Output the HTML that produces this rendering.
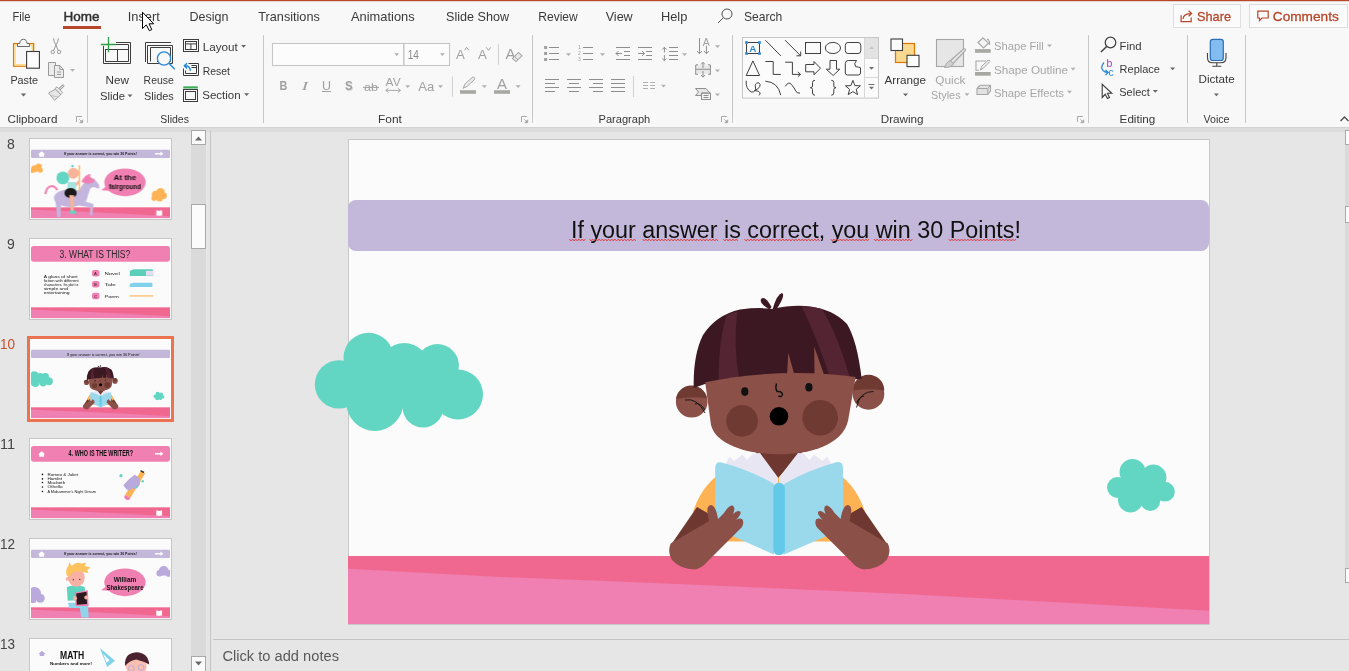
<!DOCTYPE html>
<html><head><meta charset="utf-8">
<style>
html,body{margin:0;padding:0;width:1349px;height:671px;overflow:hidden;background:#e6e6e6;}
svg{display:block;will-change:transform;font-family:"Liberation Sans",sans-serif;}
.t{fill:#383838;font-size:11.5px;}
.tab{fill:#3a3a3a;font-size:13px;}
.dis{fill:#a6a6a6;font-size:11.5px;}
.ic{fill:none;stroke:#505050;stroke-width:1;}
.icd{fill:none;stroke:#a8a8a8;stroke-width:1;}
.arr{fill:#666;}
.arrd{fill:#b0b0b0;}
.sep{stroke:#c8c8c8;stroke-width:1;}
</style></head>
<body>
<svg width="1349" height="671" viewBox="0 0 1349 671">
<!-- ===== chrome backgrounds ===== -->
<rect x="0" y="0" width="1349" height="127" fill="#f8f8f8"/>
<rect x="0" y="0" width="1349" height="1.2" fill="#b7472a"/>
<rect x="0" y="127" width="1349" height="1" fill="#d2d2d2"/>
<rect x="0" y="128" width="1349" height="4" fill="#dcdcdc"/>

<!-- ===== tabs ===== -->
<g id="tabs">
<text class="tab" x="12.5" y="21" textLength="18" lengthAdjust="spacingAndGlyphs">File</text>
<text class="tab" x="63.5" y="21" textLength="36" lengthAdjust="spacingAndGlyphs" style="fill:#303030;stroke:#303030;stroke-width:0.45">Home</text>
<rect x="63" y="26" width="38" height="3" fill="#b7472a"/>
<text class="tab" x="127.8" y="21" textLength="32" lengthAdjust="spacingAndGlyphs">Insert</text>
<text class="tab" x="189.5" y="21" textLength="39" lengthAdjust="spacingAndGlyphs">Design</text>
<text class="tab" x="258.3" y="21" textLength="61.5" lengthAdjust="spacingAndGlyphs">Transitions</text>
<text class="tab" x="351" y="21" textLength="63.7" lengthAdjust="spacingAndGlyphs">Animations</text>
<text class="tab" x="446" y="21" textLength="63" lengthAdjust="spacingAndGlyphs">Slide Show</text>
<text class="tab" x="538.3" y="21" textLength="39.4" lengthAdjust="spacingAndGlyphs">Review</text>
<text class="tab" x="605.7" y="21" textLength="27" lengthAdjust="spacingAndGlyphs">View</text>
<text class="tab" x="661" y="21" textLength="26.3" lengthAdjust="spacingAndGlyphs">Help</text>
<circle cx="727" cy="14" r="5" class="ic" stroke-width="1.2"/>
<line x1="723.3" y1="17.7" x2="718" y2="23" class="ic" stroke-width="1.3"/>
<text class="tab" x="744" y="21" textLength="38.3" lengthAdjust="spacingAndGlyphs">Search</text>
<!-- share / comments -->
<rect x="1173.5" y="4.5" width="67" height="23" fill="#fbfbfb" stroke="#dedede"/>
<path d="M1181.1 15.3 V21.6 H1191.2 V17.6" fill="none" stroke="#b7472a" stroke-width="1.2"/>
<path d="M1183 19 Q1183.5 13.6 1191 13.6 M1188.6 10.8 L1191.6 13.6 L1188.6 16.3" fill="none" stroke="#b7472a" stroke-width="1.2"/>
<text class="tab" x="1197" y="21" textLength="34" lengthAdjust="spacingAndGlyphs" style="fill:#b7472a;stroke:#b7472a;stroke-width:0.3">Share</text>
<rect x="1249.5" y="4.5" width="98" height="23" fill="#fbfbfb" stroke="#dedede"/>
<path d="M1257.8 11.2 H1268.2 V18 H1262 L1259.5 20.6 V18 H1257.8 Z" fill="none" stroke="#b7472a" stroke-width="1.2"/>
<text class="tab" x="1272.8" y="21" textLength="66" lengthAdjust="spacingAndGlyphs" style="fill:#b7472a;stroke:#b7472a;stroke-width:0.3">Comments</text>
</g>

<!-- ===== ribbon labels ===== -->
<g id="labels">
<text class="t" x="7.5" y="122.5" textLength="50" lengthAdjust="spacingAndGlyphs">Clipboard</text>
<text class="t" x="160.3" y="122.5" textLength="28.7" lengthAdjust="spacingAndGlyphs">Slides</text>
<text class="t" x="378" y="122.5" textLength="23.8" lengthAdjust="spacingAndGlyphs">Font</text>
<text class="t" x="598.5" y="122.5" textLength="51.8" lengthAdjust="spacingAndGlyphs">Paragraph</text>
<text class="t" x="880.7" y="122.5" textLength="42.9" lengthAdjust="spacingAndGlyphs">Drawing</text>
<text class="t" x="1119.6" y="122.5" textLength="35.7" lengthAdjust="spacingAndGlyphs">Editing</text>
<text class="t" x="1203.5" y="122.5" textLength="26" lengthAdjust="spacingAndGlyphs">Voice</text>
</g>
<g id="seps">
<line class="sep" x1="87.5" y1="35" x2="87.5" y2="123"/>
<line class="sep" x1="263.5" y1="35" x2="263.5" y2="123"/>
<line class="sep" x1="532.5" y1="35" x2="532.5" y2="123"/>
<line class="sep" x1="732.5" y1="35" x2="732.5" y2="123"/>
<line class="sep" x1="1088.5" y1="35" x2="1088.5" y2="123"/>
<line class="sep" x1="1187.5" y1="35" x2="1187.5" y2="123"/>
<line class="sep" x1="1245.5" y1="35" x2="1245.5" y2="123"/>
</g>

<!-- ===== Clipboard icons ===== -->
<g id="clip">
<rect x="13.6" y="43.6" width="20" height="22.6" fill="none" stroke="#e07800" stroke-width="1.3"/>
<rect x="15" y="45" width="17.2" height="19.8" fill="none" stroke="#fbd98a" stroke-width="1.6"/>
<path d="M17.5 46.5 V43.5 H19.8 Q20 39.3 23.4 39.3 Q26.8 39.3 27 43.5 H29.5 V46.5 Z" fill="#f8f8f8" stroke="#6b6b6b" stroke-width="1"/>
<rect x="26.6" y="51.5" width="12.8" height="16.7" fill="#fdfdfd" stroke="#3a3a3a" stroke-width="1.1"/>
<text class="t" x="10.4" y="83.6" textLength="27.6" lengthAdjust="spacingAndGlyphs">Paste</text>
<path d="M20.8 93.5 h5.4 l-2.7 3 z" class="arr"/>
<!-- cut -->
<g stroke="#9a9a9a" stroke-width="1" fill="none">
<circle cx="52.8" cy="52" r="1.7"/><circle cx="59.1" cy="52" r="1.7"/>
<path d="M53.6 38.3 Q53.8 42 55.9 45 L58.3 50.5 M58.4 38.3 Q58.2 42 56 45 L53.6 50.5"/>
</g>
<!-- copy -->
<g stroke="#9a9a9a" stroke-width="1" fill="#ececec">
<path d="M48.5 62.5 H55.5 V65.5 H54.5 V75.5 H48.5 Z"/>
<path d="M54.5 65.5 H59.8 L63.5 69.5 V77.5 H54.5 Z"/>
<path d="M59.8 65.5 V69.5 H63.5 M57 72 H61 M57 74.5 H61" fill="none"/>
</g>
<path d="M70 69 h5 l-2.5 2.8 z" class="arrd"/>
<!-- format painter -->
<path d="M58.8 90 L63 85.8" stroke="#a3a3a3" stroke-width="2.8" stroke-linecap="round"/>
<path d="M58.8 90 L63 85.8" stroke="#ececec" stroke-width="1" stroke-linecap="round"/>
<path d="M55.3 89.3 L48.5 93 L54.5 100.3 L60.8 94.7 Z" fill="#e6e6e6" stroke="#a3a3a3" stroke-width="1"/>
<path d="M51 95.5 L58 97" stroke="#b8b8b8" stroke-width="0.8"/>
<path d="M55 88.6 L57 86.8 L62.7 92.6 L60.9 94.6 Z" fill="#ececec" stroke="#a3a3a3" stroke-width="1"/>
<path d="M76.5 122 V116.5 H82.0" fill="none" stroke="#a8a8a8"/><path d="M79.2 119.2 L82.5 122.5 M82.7 119.8 V122.7 H79.8 Z" fill="#a8a8a8" stroke="#a8a8a8" stroke-width="0.9"/>
</g>

<!-- ===== Slides icons ===== -->
<g id="slides">
<g fill="none" stroke="#3d3d3d" stroke-width="1">
<path d="M116 42.5 H130.5 V63.5 H103.5 V46"/>
<path d="M116 44.5 H128.5 V61.5 H105.5 V49"/>
<path d="M105.5 49.5 H128.5 M117.5 49.5 V61.5"/>
</g>
<path d="M100.9 44.5 H115.9 M108.5 37.1 V52.3" stroke="#2e9e48" stroke-width="1.3" fill="none"/>
<text class="t" x="105.6" y="84" textLength="23.4" lengthAdjust="spacingAndGlyphs">New</text>
<text class="t" x="100" y="99.7" textLength="25" lengthAdjust="spacingAndGlyphs">Slide</text>
<path d="M127.5 94.5 h5 l-2.5 2.8 z" class="arr"/>
<g fill="none" stroke="#3d3d3d" stroke-width="1">
<path d="M145.5 62 V42.5 H171"/>
<path d="M147.5 63.5 V45.5 H172.5 V63.5 H147.5"/>
<path d="M150.5 61.5 V47.5 H170.5 V61.5 H157"/>
</g>
<circle cx="164" cy="58.5" r="6.6" fill="#f8f8f8" stroke="#2b88d8" stroke-width="1.3"/>
<path d="M168.8 63.3 L174.8 69.2" stroke="#2b88d8" stroke-width="1.4"/>
<text class="t" x="143.6" y="84" textLength="30.2" lengthAdjust="spacingAndGlyphs">Reuse</text>
<text class="t" x="144" y="99.7" textLength="29.8" lengthAdjust="spacingAndGlyphs">Slides</text>
<!-- layout -->
<g fill="none" stroke="#3d3d3d" stroke-width="1">
<rect x="183.5" y="39.5" width="15" height="12"/>
<rect x="185.5" y="41.5" width="11" height="8"/>
<path d="M185.5 43.9 H196.5 M190.9 43.9 V49.5"/>
<path d="M188.5 63.5 H198.5 V75.5 H183.5 V68.5"/>
<path d="M191.5 65.5 H196.5 V73.5 H185.5 V70.5 M191.5 67.5 H196.5"/>
<rect x="183.5" y="89.5" width="14" height="12"/>
<rect x="185.5" y="91.5" width="10" height="8"/>
</g>
<path d="M190.3 70.8 Q190.3 65.8 184.8 65.8 M187 63.2 L184.3 65.8 L187 68.4" fill="none" stroke="#1e88d8" stroke-width="1.4"/>
<rect x="183.3" y="86.3" width="14.5" height="2.2" fill="#3fae5a"/>
<text class="t" x="202.7" y="50.6" textLength="35" lengthAdjust="spacingAndGlyphs">Layout</text>
<path d="M241.1 45 h5 l-2.5 2.8 z" class="arr"/>
<text class="t" x="202.7" y="74.7" textLength="27.3" lengthAdjust="spacingAndGlyphs">Reset</text>
<text class="t" x="202.2" y="98.9" textLength="38.5" lengthAdjust="spacingAndGlyphs">Section</text>
<path d="M244.1 93.3 h5 l-2.5 2.8 z" class="arr"/>
</g>

<!-- ===== Font icons ===== -->
<g id="font">
<rect x="272.5" y="43.5" width="177" height="22" fill="#fcfcfc" stroke="#c6c6c6" stroke-width="1.1"/>
<line x1="403.8" y1="43.5" x2="403.8" y2="65.5" stroke="#c6c6c6" stroke-width="1.5"/>
<path d="M394.3 53.3 h4.8 l-2.4 2.8 z" class="arrd"/>
<path d="M440 53.3 h4.8 l-2.4 2.8 z" class="arrd"/>
<text x="407.7" y="59" font-size="12.3" fill="#8a8a8a" textLength="11.3" lengthAdjust="spacingAndGlyphs">14</text>
<text x="456" y="58.9" font-size="13" fill="#a0a0a0" textLength="8.8" lengthAdjust="spacingAndGlyphs">A</text>
<path d="M464.6 50.3 L466.7 47.3 L468.8 50.3" fill="none" stroke="#a0a0a0"/>
<text x="478" y="58.9" font-size="13" fill="#a0a0a0" textLength="8.8" lengthAdjust="spacingAndGlyphs">A</text>
<path d="M486.2 47.3 L488.5 50.3 L490.8 47.3" fill="none" stroke="#a0a0a0"/>
<line x1="498.5" y1="44.2" x2="498.5" y2="64.7" stroke="#d0d0d0"/>
<text x="505.5" y="59" font-size="14.5" fill="#a0a0a0" textLength="10" lengthAdjust="spacingAndGlyphs">A</text>
<path d="M512.5 58.4 L518.5 52.4 L522 55.8 L516 61.6 Z" fill="#e8e8e8" stroke="#a8a8a8" stroke-width="1.1"/>
<path d="M514.5 56.4 L518 59.8" stroke="#a8a8a8"/>
<text x="279.5" y="89.8" font-size="13.3" font-weight="bold" fill="#a0a0a0" textLength="7.8" lengthAdjust="spacingAndGlyphs">B</text>
<text x="301.5" y="89.8" font-size="13.3" font-style="italic" fill="#a0a0a0" font-family="Liberation Serif" textLength="6.8" lengthAdjust="spacingAndGlyphs">I</text>
<text x="322" y="89.5" font-size="13" fill="#a0a0a0" textLength="9" lengthAdjust="spacingAndGlyphs">U</text>
<line x1="322" y1="91.5" x2="331" y2="91.5" stroke="#a0a0a0" stroke-width="1"/>
<text x="345.8" y="90.7" font-size="13.5" font-weight="bold" fill="#d6d6d6" textLength="7.6" lengthAdjust="spacingAndGlyphs">S</text>
<text x="345" y="89.8" font-size="13.5" font-weight="bold" fill="#a0a0a0" textLength="7.6" lengthAdjust="spacingAndGlyphs">S</text>
<text x="364" y="91" font-size="11.5" fill="#a0a0a0" textLength="14" lengthAdjust="spacingAndGlyphs">ab</text>
<line x1="363" y1="87.4" x2="379" y2="87.4" stroke="#a0a0a0" stroke-width="1"/>
<text x="385.6" y="86.3" font-size="11" fill="#a0a0a0" textLength="15" lengthAdjust="spacingAndGlyphs">AV</text>
<path d="M385.8 90.4 H400.5 M388.5 88.3 L385.8 90.4 L388.5 92.5 M397.8 88.3 L400.5 90.4 L397.8 92.5" fill="none" stroke="#a0a0a0" stroke-width="0.9"/>
<path d="M405.3 85.3 h4.8 l-2.4 2.8 z" class="arrd"/>
<text x="418.3" y="90.9" font-size="13.4" fill="#a0a0a0" textLength="15.9" lengthAdjust="spacingAndGlyphs">Aa</text>
<path d="M438 85.3 h5 l-2.5 2.8 z" class="arrd"/>
<line x1="452.5" y1="76.3" x2="452.5" y2="96.7" stroke="#d0d0d0"/>
<path d="M463 88.3 L465 84 L472.3 77.3 Q474 76.6 475 78.3 L474.3 79.7 L467.3 86.3 Z" fill="#eaeaea" stroke="#a8a8a8" stroke-width="1"/>
<rect x="460" y="90.2" width="16" height="3.6" fill="#a8a8a2"/>
<path d="M481.9 85.3 h5 l-2.5 2.8 z" class="arrd"/>
<text x="497" y="88.8" font-size="14" fill="#a0a0a0" textLength="10" lengthAdjust="spacingAndGlyphs">A</text>
<rect x="494" y="90.2" width="16" height="3.6" fill="#a8a8a2"/>
<path d="M515.6 85.3 h5 l-2.5 2.8 z" class="arrd"/>
<path d="M521.5 122 V116.5 H527.0" fill="none" stroke="#a8a8a8"/><path d="M524.2 119.2 L527.5 122.5 M527.7 119.8 V122.7 H524.8 Z" fill="#a8a8a8" stroke="#a8a8a8" stroke-width="0.9"/>
</g>

<!-- ===== Paragraph icons ===== -->
<g id="para" fill="none" stroke="#8e8e8e" stroke-width="1">
<path d="M549 47.5 H559 M549 53.5 H559 M549 59.5 H559"/>
<path d="M583 47.5 H593 M583 53.5 H593 M583 59.5 H593"/>
<path d="M616 47.5 H630 M616 59.5 H630 M624 51.5 H630 M624 55.5 H630 M616 53.5 H622 M618.5 51 L616 53.5 L618.5 56"/>
<path d="M638 47.5 H652 M638 59.5 H652 M646 51.5 H652 M646 55.5 H652 M638 53.5 H644.5 M642 51 L644.5 53.5 L642 56"/>
<path d="M669 47.5 H678 M669 51.5 H678 M669 55.5 H678 M669 59.5 H678 M664.4 47.5 V52.5 M664.4 55 V60.5 M662.2 49.5 L664.4 47.3 L666.6 49.5 M662.2 58.5 L664.4 60.7 L666.6 58.5"/>
<path d="M545 79.5 H559 M545 83.5 H555 M545 87.5 H559 M545 91.5 H555"/>
<path d="M567 79.5 H581 M569 83.5 H579 M567 87.5 H581 M569 91.5 H579"/>
<path d="M589 79.5 H603 M593 83.5 H603 M589 87.5 H603 M593 91.5 H603"/>
<path d="M611 79.5 H625 M611 83.5 H625 M611 87.5 H625 M611 91.5 H625"/>
<path d="M643 82.5 H648 M650.2 82.5 H655 M643 85.5 H648 M650.2 85.5 H655 M643 88.5 H648 M650.2 88.5 H655" stroke="#b0b0b0"/>
<path d="M699.5 38 V53.5 M697 51 L699.5 53.7 L702 51 M706.4 45.6 V53.5 M704 51 L706.4 53.7 L708.8 51"/>
<path d="M695.8 64.9 H698 M695.8 64.9 V74.2 H698 M710.3 64.9 H708 M710.3 64.9 V74.2 H708" stroke-width="1.2"/>
<rect x="696.5" y="65.5" width="13" height="8.3" fill="#e8e8e8" stroke="none"/>
<path d="M696 69.3 H710 M703 62.5 V68 M703 71 V77 M701 64.5 L703 62.3 L705 64.5 M701 75 L703 77.2 L705 75"/>
<path d="M695.5 88.5 H706 L710 93 H701.5 V95.5 H695.5 L698.5 92 Z" fill="#e6e6e6"/>
<rect x="701.5" y="93.3" width="9" height="6.2" fill="#f4f4f4"/>
<path d="M703.5 95.5 H708.5 M703.5 97.5 H708.5"/>
</g>
<text x="702.8" y="45.6" font-size="10" fill="#a0a0a0" textLength="7" lengthAdjust="spacingAndGlyphs">A</text>
<g fill="#a0a0a0">
<rect x="544.1" y="46" width="3" height="3"/><rect x="544.1" y="52" width="3" height="3"/><rect x="544.1" y="58" width="3" height="3"/>
</g>
<g font-size="5" fill="#a0a0a0">
<text x="578.3" y="49.3">1</text><text x="578" y="55.3">2</text><text x="578" y="61.3">3</text>
</g>
<g class="arrd">
<path d="M566 53.3 h5 l-2.5 2.8 z"/><path d="M600 53.3 h5 l-2.5 2.8 z"/><path d="M682 53.3 h5 l-2.5 2.8 z"/>
<path d="M715 45.3 h5 l-2.5 2.8 z"/><path d="M715 69.5 h5 l-2.5 2.8 z"/><path d="M715 93.5 h5 l-2.5 2.8 z"/>
<path d="M661 84.8 h5 l-2.5 2.8 z"/>
</g>
<line x1="633.5" y1="76" x2="633.5" y2="97" stroke="#d0d0d0"/>
<path d="M721.5 122 V116.5 H727.0" fill="none" stroke="#a8a8a8"/><path d="M724.2 119.2 L727.5 122.5 M727.7 119.8 V122.7 H724.8 Z" fill="#a8a8a8" stroke="#a8a8a8" stroke-width="0.9"/>

<!-- ===== Drawing gallery ===== -->
<g id="draw">
<rect x="742.5" y="37.5" width="136" height="60.6" fill="#fbfbfb" stroke="#c6c6c6"/>
<rect x="865" y="38" width="13" height="20.3" fill="#e3e3e3"/>
<path d="M864.5 38 V98 M865 58.3 H878 M865 77.5 H878" stroke="#d8d8d8" fill="none"/>
<path d="M869 49 h5 l-2.5 -2.8 z" fill="#c4c4c4"/>
<path d="M869 67 h5 l-2.5 2.8 z" fill="#707070"/>
<path d="M868.5 84.5 H874.5" stroke="#707070" fill="none"/><path d="M869 86.8 h5 l-2.5 2.8 z" fill="#707070"/>
<g fill="none" stroke="#404040" stroke-width="1">
<rect x="746.5" y="42.5" width="13" height="11"/>
<path d="M765.4 40.2 L780.8 55.8"/>
<path d="M785.1 40.2 L800.5 55.6 M800.7 51.5 V55.8 H796.4"/>
<rect x="805.5" y="42.5" width="15" height="11"/>
<ellipse cx="832.9" cy="48" rx="7.6" ry="5.6"/>
<rect x="845.3" y="42.5" width="15.5" height="11" rx="2.8"/>
<path d="M752.9 60.9 L759.6 75.5 H746.2 Z"/>
<path d="M765.4 61.5 H773.2 V74.4 H780.8"/>
<path d="M785.1 62.2 H792.4 V74.4 H800.5 M797.8 71.9 L800.5 74.4 L797.8 76.9"/>
<path d="M805.7 64.5 H814 V61.5 L820.5 68.2 L814 74.8 V71.8 H805.7 Z"/>
<path d="M830 60.5 H836.5 V69.2 H839.8 L833.2 75.5 L826.3 69.2 H830 Z"/>
<path d="M845.3 63.5 Q845.3 60.5 848.3 60.5 H856.5 Q853.5 63.5 855.5 66.5 Q858.3 67 860.5 67.8 V73 Q860.5 75 858.3 75 H847.5 Q845.3 75 845.3 73 Z"/>
<path d="M746.2 80.7 Q745.5 89 751.4 92.1 Q756 92 755.6 88 Q754 83 758.7 82.7 Q761 84 759.7 86.9 Q757 90 754.5 90.5 Q760 91 760.2 93 Q760 95 758.7 95.2"/>
<path d="M765.4 81.2 Q778 82 780.8 95.2"/>
<path d="M785.3 86.4 Q788.5 81 791.5 84.5 Q794.5 88 796 91.5 Q797.5 93.5 800 93.1"/>
<path d="M815 80.3 Q812.5 80.3 812.5 82.5 V86 Q812.5 87.7 810.3 87.7 Q812.5 87.7 812.5 89.5 V93 Q812.5 95.2 815 95.2"/>
<path d="M831.3 80.3 Q833.8 80.3 833.8 82.5 V86 Q833.8 87.7 836 87.7 Q833.8 87.7 833.8 89.5 V93 Q833.8 95.2 831.3 95.2"/>
<path d="M852.9 80.4 L854.9 85.6 L860.4 85.8 L856.2 89.3 L857.6 94.6 L852.9 91.6 L848.2 94.6 L849.6 89.3 L845.4 85.8 L850.9 85.6 Z"/>
</g>
<g fill="#f8f8f8" stroke="#2b88d8" stroke-width="0.9">
<rect x="745.6" y="41.6" width="1.8" height="1.8"/><rect x="758.6" y="41.6" width="1.8" height="1.8"/>
<rect x="745.6" y="52.6" width="1.8" height="1.8"/><rect x="758.6" y="52.6" width="1.8" height="1.8"/>
</g>
<text x="749.3" y="51.8" font-size="9.5" font-weight="bold" fill="#2b88d8" textLength="7.2" lengthAdjust="spacingAndGlyphs">A</text>

<!-- arrange -->
<rect x="895.5" y="43.5" width="19" height="19" fill="#f9d88f" stroke="#e07800" stroke-width="1.2"/>
<rect x="891" y="39" width="11.5" height="11.5" fill="#fbfbfb" stroke="#3d3d3d" stroke-width="1.1"/>
<rect x="907" y="55.3" width="12" height="11.3" fill="#fbfbfb" stroke="#3d3d3d" stroke-width="1.1"/>
<text class="t" x="884.5" y="84.3" textLength="41.5" lengthAdjust="spacingAndGlyphs">Arrange</text>
<path d="M903 93.5 h5 l-2.5 2.8 z" class="arr"/>
<!-- quick styles -->
<rect x="936.5" y="39.5" width="27" height="27" fill="#e6e6e6" stroke="#a6a6a6" stroke-width="1.1"/>
<path d="M950 61 L963.5 49 Q966 48.2 965.3 50.7 L953 63.5 Z" fill="#e6e6e6" stroke="#a6a6a6" stroke-width="1.1"/>
<path d="M944.5 67.5 Q947 61 950.5 60.8 L953.5 63.8 Q952 67.5 944.5 67.5 Z" fill="#d0d0d0" stroke="#a6a6a6" stroke-width="1"/>
<text class="dis" x="935.3" y="83.6" textLength="30.2" lengthAdjust="spacingAndGlyphs">Quick</text>
<text class="dis" x="931" y="98.7" textLength="29.6" lengthAdjust="spacingAndGlyphs">Styles</text>
<path d="M964.5 93.3 h5 l-2.5 2.8 z" class="arrd"/>
<!-- shape fill/outline/effects -->
<path d="M978 42.5 L983 37.8 L988.5 43.2 L983.5 48 Z" fill="#f4f4f4" stroke="#a6a6a6" stroke-width="1.1"/>
<path d="M987 39 Q990 40 989.5 45" fill="none" stroke="#a6a6a6" stroke-width="1.1"/>
<rect x="975" y="49.1" width="15.7" height="3.7" fill="#a8a8a2"/>
<path d="M979 70.3 H976 V61 H986" fill="none" stroke="#a6a6a6" stroke-width="1.1"/>
<path d="M980.5 70 L981.5 66.5 L988 60.3 Q989.5 59.8 990 61.3 L983.8 67.8 Z" fill="#f0f0f0" stroke="#a6a6a6" stroke-width="1"/>
<rect x="975" y="72" width="15.7" height="3.7" fill="#a8a8a2"/>
<path d="M977 88.5 L980 85.3 H990.5 V91 L987.8 94.5 H977 Z" fill="#e2e2e2" stroke="#a6a6a6" stroke-width="1.1"/>
<path d="M977 88.5 H987.8 L990.5 85.3 M987.8 88.5 V94.5" fill="none" stroke="#a6a6a6" stroke-width="1"/>
<text class="dis" x="994" y="50" textLength="49.8" lengthAdjust="spacingAndGlyphs">Shape Fill</text>
<path d="M1047 44.5 h5 l-2.5 2.8 z" class="arrd"/>
<text class="dis" x="994" y="73.5" textLength="74" lengthAdjust="spacingAndGlyphs">Shape Outline</text>
<path d="M1070.6 67.8 h5 l-2.5 2.8 z" class="arrd"/>
<text class="dis" x="994" y="96.5" textLength="70" lengthAdjust="spacingAndGlyphs">Shape Effects</text>
<path d="M1067 90.8 h5 l-2.5 2.8 z" class="arrd"/>
<path d="M1077.5 122 V116.5 H1083.0" fill="none" stroke="#a8a8a8"/><path d="M1080.2 119.2 L1083.5 122.5 M1083.7 119.8 V122.7 H1080.8 Z" fill="#a8a8a8" stroke="#a8a8a8" stroke-width="0.9"/>
</g>

<!-- ===== Editing ===== -->
<g id="edit">
<circle cx="1110.5" cy="42.5" r="5.3" fill="none" stroke="#3d3d3d" stroke-width="1.2"/>
<path d="M1106.6 46.4 L1101 52" stroke="#3d3d3d" stroke-width="1.4"/>
<text class="t" x="1119.6" y="49.7" textLength="22" lengthAdjust="spacingAndGlyphs">Find</text>
<text x="1106.5" y="67" font-size="10.5" fill="#a23ab8">b</text>
<text x="1108.5" y="76" font-size="10.5" fill="#2b88d8">c</text>
<path d="M1104 62.5 Q1100 67 1103 70.5 Q1105 72.5 1108 72.5 M1105.5 70 L1108.3 72.5 L1105.5 75" fill="none" stroke="#2b88d8" stroke-width="1.2"/>
<text class="t" x="1119.6" y="73.2" textLength="40.4" lengthAdjust="spacingAndGlyphs">Replace</text>
<path d="M1170.1 67.5 h5 l-2.5 2.8 z" class="arr"/>
<path d="M1102.2 84.3 V97.5 L1105.2 94.3 L1107.5 98.5 L1109.5 97.5 L1107.4 93.3 L1111.8 93.3 Z" fill="#fbfbfb" stroke="#3d3d3d" stroke-width="1.1"/>
<text class="t" x="1119.3" y="95.6" textLength="30.5" lengthAdjust="spacingAndGlyphs">Select</text>
<path d="M1152.8 90 h5 l-2.5 2.8 z" class="arr"/>
</g>
<!-- ===== Voice ===== -->
<g id="voice">
<rect x="1210.3" y="39.3" width="13" height="21.2" rx="2.5" fill="#83bdf0" stroke="#2b6fb8" stroke-width="1.2"/>
<path d="M1207.5 53 V57.5 Q1207.5 62.8 1212.5 62.8 H1221 Q1226 62.8 1226 57.5 V53" fill="none" stroke="#404040" stroke-width="1.1"/>
<path d="M1216.8 62.8 V66 M1212.3 66.3 H1221.3" fill="none" stroke="#404040" stroke-width="1.1"/>
<text class="t" x="1198.5" y="83.3" textLength="36.3" lengthAdjust="spacingAndGlyphs">Dictate</text>
<path d="M1213.9 93.5 h5 l-2.5 2.8 z" class="arr"/>
<path d="M1340.5 121 L1344.5 117 L1348.5 121" fill="none" stroke="#505050" stroke-width="1.4"/>
</g>
<!-- cursor -->
<path d="M142.5 12.2 L142.5 28.6 L146.3 24.8 L149.3 30.7 L151.8 29.6 L149 23.8 L153.7 23.8 Z" fill="#fff" stroke="#000" stroke-width="1"/>

<!-- ===== left panel ===== -->
<rect x="191" y="131" width="15" height="540" fill="#dadada"/>
<rect x="191.5" y="130.5" width="14" height="14" fill="#fbfbfb" stroke="#a8a8a8"/>
<path d="M195 140.5 L198.5 136.5 L202 140.5 Z" fill="#6a6a6a"/>
<rect x="191.5" y="204.5" width="14" height="44" fill="#fbfbfb" stroke="#a8a8a8"/>
<rect x="191.5" y="656.5" width="14" height="15" fill="#fbfbfb" stroke="#a8a8a8"/>
<path d="M195 661.5 L198.5 665.5 L202 661.5 Z" fill="#6a6a6a"/>
<line x1="210.5" y1="131" x2="210.5" y2="671" stroke="#c4c4c4"/>

<!-- right scrollbar -->
<rect x="1345" y="131" width="4" height="437" fill="#dadada"/>
<rect x="1345.5" y="568.5" width="5" height="14" fill="#fbfbfb" stroke="#a8a8a8"/>
<rect x="1345.5" y="130.5" width="5" height="14" fill="#fbfbfb" stroke="#a8a8a8"/>
<rect x="1345.5" y="206.5" width="5" height="16" fill="#fbfbfb" stroke="#a8a8a8"/>

<!-- notes -->
<line x1="213" y1="639.5" x2="1349" y2="639.5" stroke="#c4c4c4"/>
<text x="222.4" y="660.7" font-size="15.4" fill="#595959" textLength="116.6" lengthAdjust="spacingAndGlyphs">Click to add notes</text>

<!-- ===== main slide ===== -->
<defs>
<g id="sbg"><rect x="348" y="139" width="861" height="485" fill="#fbfbfb"/></g>
<g id="pbar"><rect x="348" y="200" width="861" height="51" rx="8" fill="#c3b8da"/></g>
<g id="band"><rect x="348" y="556" width="861" height="68" fill="#f06890"/>
<path d="M348 568.8 L500 576.9 L600 580.8 L900 593.7 L1209 610.7 V624 H348 Z" fill="#f07fb2"/></g>
<g id="title10"><text x="571" y="237.6" font-size="23" fill="#111" textLength="450" lengthAdjust="spacingAndGlyphs">If your answer is correct, you win 30 Points!</text></g>
<g id="clouds10" fill="#63d6c3">
<circle cx="339" cy="384.4" r="24.2"/>
<circle cx="368.5" cy="357.8" r="25"/>
<circle cx="374.8" cy="402.3" r="28.6"/>
<circle cx="404.3" cy="368.3" r="25.3"/>
<circle cx="437.4" cy="365.6" r="21.5"/>
<circle cx="423" cy="407.2" r="20.4"/>
<circle cx="458" cy="394.5" r="25"/>
<rect x="352" y="372" width="96" height="34"/>
<circle cx="1117.4" cy="487.5" r="10.4"/>
<circle cx="1132.5" cy="471.9" r="13"/>
<circle cx="1153.4" cy="477.6" r="13"/>
<circle cx="1164.9" cy="491.7" r="9.9"/>
<circle cx="1130.5" cy="500" r="12.5"/>
<circle cx="1150.3" cy="501.1" r="9.9"/>
<rect x="1120" y="478" width="40" height="20"/>
</g>
<g id="boy">
<!-- shirt -->
<path d="M693 512 Q702 483 728 468 H830 Q856 483 865 512 L852 541.5 H706 Z" fill="#fdb354"/>
<!-- neck -->
<path d="M752 448 H806 L778 478 Z" fill="#6e3730"/>
<!-- collar -->
<path d="M729.5 456.5 L734 461 L742.5 454.5 L747 460 L753 453.5 L760 453 L778 477.5 L778 492 L720 475 Z" fill="#e9e6f3"/>
<path d="M827 456.5 L822.5 461 L814 454.5 L809.5 460 L803.5 453.5 L798 453 L779 477.5 L779 492 L838 475 Z" fill="#e9e6f3"/>
<!-- book -->
<path d="M715.2 468 Q715.2 461.5 721.5 462.5 Q750 470 774 484 V554.5 L735.8 537.4 L715.2 528 Z" fill="#99d9eb"/>
<path d="M843 468 Q843 461 837 462 Q808 470 784 484 V554.5 L823.3 537.4 L843 528 Z" fill="#99d9eb"/>
<rect x="773.3" y="482.8" width="11.6" height="72.2" rx="5.5" fill="#62c9e8"/>
<!-- ears -->
<circle cx="691.7" cy="401.8" r="15.8" fill="#8b5048"/>
<path d="M675.9 399 A15.8 15.8 0 0 1 707 398 Q690 396 675.9 399 Z" fill="#6e3a32"/>
<circle cx="868.5" cy="393.9" r="15.8" fill="#8b5048"/>
<path d="M852.7 390.5 A15.8 15.8 0 0 1 884.3 390.5 Q868 388 852.7 390.5 Z" fill="#6e3a32"/>
<path d="M685 400 Q697 397.5 705 413 M695 404 Q700 402 705 410" fill="none" stroke="#111" stroke-width="0.9"/>
<path d="M873.5 391.5 Q860 391 856.5 407.5 M864 396 Q858.5 397 856.8 403" fill="none" stroke="#111" stroke-width="0.9"/>
<!-- hair -->
<path d="M769.5 309.5 Q758 303 761.5 298.5 Q765.5 296 771.5 307 Z" fill="#3c1823"/>
<path d="M772.5 309.5 Q777 294 782 293 Q786 295 776 310 Z" fill="#3c1823"/>
<path d="M693.7 388 Q693 355 703 335 Q716 315 740 309.5 Q760 307 772.5 309 Q790 305 805 306 Q832 308 847 324 Q857 340 861.7 379 L705 384 Z" fill="#3c1823"/>
<path d="M726.3 315.5 Q732 312.5 737.4 311.5 Q733 345 739 378 L718.6 380 Q718 345 726.3 315.5 Z" fill="#552433"/>
<path d="M801.7 306.4 Q812 306 822.2 309 Q840 340 849.7 377.5 L829.1 375 Q818 340 801.7 306.4 Z" fill="#552433"/>
<!-- face -->
<path d="M705.2 382.3 Q780 367 855.6 376.9 L848.2 420 C843 445 810 454.3 779 454.3 C748 454.3 716 445 711 425 Z" fill="#8b5048"/>
<path d="M787.1 374 L788.3 352.7 L794 373.5 Z M814.5 374 L814.2 346.7 L824 374.5 Z" fill="#8b5048"/>
<circle cx="742.1" cy="420.9" r="15.8" fill="#6e3a32"/>
<circle cx="820.2" cy="417.7" r="17.8" fill="#6e3a32"/>
<ellipse cx="744.8" cy="391.6" rx="3.6" ry="4.3" fill="#111"/>
<ellipse cx="808.9" cy="387.3" rx="3.6" ry="4.3" fill="#111"/>
<circle cx="779" cy="416.3" r="9.3" fill="#000"/>
<path d="M776.5 383.5 Q775 388 777 391.5 Q782 391 782.5 394.5 Q782 397.5 778.5 396" fill="none" stroke="#111" stroke-width="1.4"/>
<!-- arms -->
<g id="armL">
<path d="M697 507 L670.5 545.5 L711.5 521.5 L707.5 513 Z" fill="#6e3730"/>
<path d="M670.7 543.5 Q667 552 672 560 Q680 569 695 569.5 Q702 568 707 562 L739 530 Q745 525 742.5 519.5 Q740 517.5 736 520 Q742 514 740.2 511.5 Q737.5 509.5 733 514 Q736 507 732.5 505.5 Q729 505 724 513 L718 519 Q716 506 711 505 Q706.5 505.5 707.5 513 L709 521 Z" fill="#8b5048"/>
</g>
<use href="#armL" transform="translate(1558.6,0) scale(-1,1)"/>
</g>
</defs>
<use href="#sbg"/><rect x="348.5" y="139.5" width="861" height="485" fill="none" stroke="#c8c8c8"/>
<use href="#pbar"/><use href="#title10"/><use href="#band"/>
<path d="M569.3 239.0 L570.9 241.0 L572.5 239.0 L574.1 241.0 L575.7 239.0 L577.3 241.0 L578.9 239.0 L580.5 241.0 L582.1 239.0 L583.7 241.0 L585.3 239.0 M589.4 239.0 L591.0 241.0 L592.6 239.0 L594.2 241.0 L595.8 239.0 L597.4 241.0 L599.0 239.0 L600.6 241.0 L602.2 239.0 L603.8 241.0 L605.4 239.0 L607.0 241.0 L608.6 239.0 L610.2 241.0 L611.8 239.0 L613.4 241.0 L615.0 239.0 L616.6 241.0 L618.2 239.0 L619.8 241.0 L621.4 239.0 L623.0 241.0 L624.6 239.0 L626.2 241.0 L627.8 239.0 L629.4 241.0 L631.0 239.0 L632.6 241.0 L634.2 239.0 L635.8 241.0 M642.7 239.0 L644.3 241.0 L645.9 239.0 L647.5 241.0 L649.1 239.0 L650.7 241.0 L652.3 239.0 L653.9 241.0 L655.5 239.0 L657.1 241.0 L658.7 239.0 L660.3 241.0 L661.9 239.0 L663.5 241.0 L665.1 239.0 L666.7 241.0 L668.3 239.0 L669.9 241.0 L671.5 239.0 L673.1 241.0 L674.7 239.0 L676.3 241.0 L677.9 239.0 L679.5 241.0 L681.1 239.0 L682.7 241.0 L684.3 239.0 L685.9 241.0 L687.5 239.0 L689.1 241.0 L690.7 239.0 L692.3 241.0 L693.9 239.0 L695.5 241.0 L697.1 239.0 L698.7 241.0 L700.3 239.0 L701.9 241.0 L703.5 239.0 L705.1 241.0 L706.7 239.0 L708.3 241.0 L709.9 239.0 L711.5 241.0 L713.1 239.0 L714.7 241.0 L716.3 239.0 L717.9 241.0 M723.3 239.0 L724.9 241.0 L726.5 239.0 L728.1 241.0 L729.7 239.0 L731.3 241.0 L732.9 239.0 L734.5 241.0 L736.1 239.0 L737.7 241.0 M744.5 239.0 L746.1 241.0 L747.7 239.0 L749.3 241.0 L750.9 239.0 L752.5 241.0 L754.1 239.0 L755.7 241.0 L757.3 239.0 L758.9 241.0 L760.5 239.0 L762.1 241.0 L763.7 239.0 L765.3 241.0 L766.9 239.0 L768.5 241.0 L770.1 239.0 L771.7 241.0 L773.3 239.0 L774.9 241.0 L776.5 239.0 L778.1 241.0 L779.7 239.0 L781.3 241.0 L782.9 239.0 L784.5 241.0 L786.1 239.0 L787.7 241.0 L789.3 239.0 L790.9 241.0 L792.5 239.0 L794.1 241.0 L795.7 239.0 L797.3 241.0 L798.9 239.0 L800.5 241.0 L802.1 239.0 L803.7 241.0 L805.3 239.0 L806.9 241.0 L808.5 239.0 L810.1 241.0 L811.7 239.0 L813.3 241.0 L814.9 239.0 L816.5 241.0 L818.1 239.0 L819.7 241.0 M830.6 239.0 L832.2 241.0 L833.8 239.0 L835.4 241.0 L837.0 239.0 L838.6 241.0 L840.2 239.0 L841.8 241.0 L843.4 239.0 L845.0 241.0 L846.6 239.0 L848.2 241.0 L849.8 239.0 L851.4 241.0 L853.0 239.0 L854.6 241.0 L856.2 239.0 L857.8 241.0 L859.4 239.0 L861.0 241.0 L862.6 239.0 L864.2 241.0 L865.8 239.0 L867.4 241.0 L869.0 239.0 M874.0 239.0 L875.6 241.0 L877.2 239.0 L878.8 241.0 L880.4 239.0 L882.0 241.0 L883.6 239.0 L885.2 241.0 L886.8 239.0 L888.4 241.0 L890.0 239.0 L891.6 241.0 L893.2 239.0 L894.8 241.0 L896.4 239.0 L898.0 241.0 L899.6 239.0 L901.2 241.0 L902.8 239.0 L904.4 241.0 L906.0 239.0 L907.6 241.0 L909.2 239.0 L910.8 241.0 L912.4 239.0 M948.7 239.0 L950.3 241.0 L951.9 239.0 L953.5 241.0 L955.1 239.0 L956.7 241.0 L958.3 239.0 L959.9 241.0 L961.5 239.0 L963.1 241.0 L964.7 239.0 L966.3 241.0 L967.9 239.0 L969.5 241.0 L971.1 239.0 L972.7 241.0 L974.3 239.0 L975.9 241.0 L977.5 239.0 L979.1 241.0 L980.7 239.0 L982.3 241.0 L983.9 239.0 L985.5 241.0 L987.1 239.0 L988.7 241.0 L990.3 239.0 L991.9 241.0 L993.5 239.0 L995.1 241.0 L996.7 239.0 L998.3 241.0 L999.9 239.0 L1001.5 241.0 L1003.1 239.0 L1004.7 241.0 L1006.3 239.0 L1007.9 241.0 L1009.5 239.0 L1011.1 241.0 L1012.7 239.0 L1014.3 241.0 L1015.9 239.0" fill="none" stroke="#e23b3b" stroke-width="0.9"/>
<use href="#clouds10"/><use href="#boy"/>
<!-- ===== thumbnails ===== -->
<defs>
<g id="homeic" fill="#ffffff"><path d="M-22 4 L0 -16 L22 4 H15 V18 H-15 V4 Z"/></g>
<g id="arric" fill="#ffffff"><path d="M-26 -5 H8 V-14 L26 0 L8 14 V5 H-26 Z"/></g>
<g id="bookic" fill="#ffffff"><path d="M-18 -16 Q-9 -19 0 -13 Q9 -19 18 -16 V16 Q9 12 0 17 Q-9 12 -18 16 Z"/></g>
<g id="ptitle"><rect x="348" y="176" width="861" height="97" rx="16" fill="#f07fb2"/></g>
<g id="tbubble">
<ellipse cx="930" cy="401" rx="128" ry="86" fill="#f07fb2"/>
<path d="M820 420 L783 451 L860 455 Z" fill="#f07fb2"/>
</g>
<g id="tsmalltitle"><text x="552" y="234" font-size="22" font-weight="bold" fill="#1a1a1a" textLength="452" lengthAdjust="spacingAndGlyphs">If your answer is correct, you win 30 Points!</text></g>
<g id="th8">
<use href="#sbg"/><use href="#band"/><use href="#pbar"/><use href="#tsmalltitle"/>
<use href="#homeic" transform="translate(414,224)"/><use href="#arric" transform="translate(1142,224)"/>
<g fill="#fdb354"><circle cx="370" cy="318" r="22"/><circle cx="395" cy="305" r="20"/><circle cx="405" cy="325" r="16"/><circle cx="355" cy="330" r="14"/></g>
<g fill="#fdb354"><circle cx="1120" cy="478" r="24"/><circle cx="1150" cy="462" r="26"/><circle cx="1170" cy="485" r="20"/><circle cx="1110" cy="500" r="16"/><circle cx="1145" cy="500" r="20"/></g>
<path d="M436 474 Q445 425 477 424 Q500 426 510 450" fill="none" stroke="#f07fb2" stroke-width="13"/>
<ellipse cx="590" cy="498" rx="100" ry="56" fill="#c3b5dd"/>
<path d="M640 470 Q660 400 710 385 Q750 375 770 420 Q775 440 760 440 Q735 420 715 440 Q700 480 690 520 Z" fill="#c3b5dd"/>
<path d="M650 510 L735 535 L728 607 L712 605 L715 555 L645 545 Z" fill="#c3b5dd"/>
<path d="M500 520 L535 530 L530 618 L510 618 Z" fill="#c3b5dd"/>
<path d="M660 400 Q680 350 720 350 Q700 370 740 380 Q760 395 700 410 Z" fill="#f07fb2"/>
<rect x="643" y="295" width="8" height="162" fill="#fdb354"/>
<circle cx="545" cy="374" r="40" fill="#63d6c3"/>
<circle cx="610" cy="345" r="34" fill="#f7b49a"/>
<circle cx="605" cy="300" r="8" fill="#63d6c3"/>
<path d="M575 400 H625 L630 455 H570 Z" fill="#a8e3e4"/>
<path d="M620 410 L645 385 L652 395 L630 425 Z" fill="#f7b49a"/>
<ellipse cx="593" cy="468" rx="38" ry="31" fill="#1a1a1a"/>
<path d="M585 480 L615 482 L612 580 L595 580 Z" fill="#f7b49a"/>
<path d="M590 575 L625 578 L630 595 L588 596 Z" fill="#63d6c3"/>
<use href="#tbubble"/>
<text x="930" y="388" text-anchor="middle" font-size="46" font-weight="bold" fill="#111" textLength="140" lengthAdjust="spacingAndGlyphs">At the</text>
<text x="930" y="440" text-anchor="middle" font-size="46" font-weight="bold" fill="#111" textLength="200" lengthAdjust="spacingAndGlyphs">fairground</text>
<use href="#bookic" transform="translate(1142,592)"/>
</g>
<g id="th9">
<use href="#sbg"/><use href="#ptitle"/>
<text x="525" y="249" font-size="66" fill="#2a2a2a" textLength="438" lengthAdjust="spacingAndGlyphs">3. WHAT IS THIS?</text>
<g font-size="20" fill="#111">
<text x="427" y="372" textLength="210" lengthAdjust="spacingAndGlyphs">A glass of short</text>
<text x="427" y="397" textLength="216" lengthAdjust="spacingAndGlyphs">fiction with different</text>
<text x="427" y="422" textLength="214" lengthAdjust="spacingAndGlyphs">characters. Its plot is</text>
<text x="427" y="447" textLength="150" lengthAdjust="spacingAndGlyphs">simple and</text>
<text x="427" y="472" textLength="160" lengthAdjust="spacingAndGlyphs">entertaining</text>
</g>
<g fill="#f07fb2"><rect x="726" y="325" width="46" height="40" rx="12"/><rect x="726" y="393" width="46" height="40" rx="12"/><rect x="726" y="466" width="46" height="40" rx="12"/></g>
<g font-size="26" fill="#222">
<text x="739" y="355">A</text><text x="739" y="423">B</text><text x="739" y="496">C</text>
<text x="803" y="355" textLength="95" lengthAdjust="spacingAndGlyphs">Novel</text>
<text x="803" y="423" textLength="70" lengthAdjust="spacingAndGlyphs">Tale</text>
<text x="803" y="496" textLength="90" lengthAdjust="spacingAndGlyphs">Poem</text>
</g>
<path d="M960 330 L985 320 H1100 L1105 330 V362 H960 Z" fill="#5ccfb8"/>
<rect x="1060" y="330" width="44" height="30" fill="#e6def0"/>
<path d="M960 410 L985 404 H1100 V430 H960 Z" fill="#7fd1ec"/>
<rect x="960" y="482" width="145" height="7" fill="#fdb354"/>
<use href="#band"/>
</g>
<g id="th11">
<use href="#sbg"/><use href="#ptitle"/>
<use href="#homeic" transform="translate(414,224)"/><use href="#arric" transform="translate(1142,224)"/>
<text x="581" y="238" font-size="56" font-weight="bold" fill="#111" textLength="399" lengthAdjust="spacingAndGlyphs">4. WHO IS THE WRITER?</text>
<g fill="#111"><circle cx="419" cy="352" r="5"/><circle cx="419" cy="380" r="5"/><circle cx="419" cy="402" r="5"/><circle cx="419" cy="430" r="5"/><circle cx="419" cy="458" r="5"/></g>
<g font-size="21" fill="#111">
<text x="450" y="359" textLength="190" lengthAdjust="spacingAndGlyphs">Romeo &amp; Juliet</text>
<text x="450" y="387" textLength="90" lengthAdjust="spacingAndGlyphs">Hamlet</text>
<text x="450" y="409" textLength="110" lengthAdjust="spacingAndGlyphs">Macbeth</text>
<text x="450" y="437" textLength="94" lengthAdjust="spacingAndGlyphs">Othello</text>
<text x="450" y="465" textLength="300" lengthAdjust="spacingAndGlyphs">A Midsummer's Night Dream</text>
</g>
<path d="M1030 330 L1055 345 L965 495 L930 480 Z" fill="#fdb354"/>
<path d="M930 480 L965 495 L955 510 Q935 515 925 495 Z" fill="#f07fb2"/>
<path d="M990 355 Q1040 380 1020 420 Q1000 450 975 440 Q950 470 920 420 Q950 380 990 355 Z" fill="#b9a9dc"/>
<path d="M1028 325 L1050 335 L1045 345 L1025 332 Z" fill="#333"/>
<g fill="#63d6c3"><circle cx="905" cy="360" r="10"/><circle cx="1040" cy="395" r="8"/><circle cx="1000" cy="430" r="8"/></g>
<use href="#band"/>
<use href="#bookic" transform="translate(1142,592)"/>
</g>
<g id="th12">
<use href="#sbg"/><use href="#band"/><use href="#pbar"/><use href="#tsmalltitle"/>
<use href="#homeic" transform="translate(414,224)"/><use href="#arric" transform="translate(1142,224)"/>
<g fill="#b9a9dc"><circle cx="370" cy="470" r="40"/><circle cx="405" cy="500" r="28"/><circle cx="360" cy="510" r="20"/></g>
<g fill="#b9a9dc"><circle cx="1170" cy="330" r="30"/><circle cx="1145" cy="345" r="20"/><circle cx="1200" cy="345" r="22"/></g>
<path d="M577 528 L701 528 L705 619 L660 619 L650 560 L585 560 Z" fill="#8fd6ec"/>
<path d="M570 430 Q625 410 680 430 L690 510 L575 515 Z" fill="#5ed3c0"/>
<ellipse cx="629" cy="372" rx="52" ry="56" fill="#f8b0a4"/>
<circle cx="575" cy="380" r="12" fill="#f8b0a4"/>
<path d="M568 357 Q560 320 580 300 L585 275 L600 300 Q630 270 660 285 L690 280 L680 300 L718 310 L695 325 L705 345 Q650 330 620 335 Q595 340 585 370 Z" fill="#fbc25e"/>
<g fill="#333"><circle cx="610" cy="385" r="4"/><circle cx="650" cy="383" r="4"/></g>
<path d="M618 465 L700 450 L705 548 L625 548 Z" fill="#f07fb2"/>
<path d="M628 470 L692 460 L695 535 L632 540 Z" fill="#2a1a20"/>
<circle cx="620" cy="500" r="13" fill="#f8b0a4"/><circle cx="690" cy="495" r="12" fill="#f8b0a4"/>
<use href="#tbubble"/>
<text x="930" y="398" text-anchor="middle" font-size="46" font-weight="bold" fill="#111" textLength="140" lengthAdjust="spacingAndGlyphs">William</text>
<text x="930" y="446" text-anchor="middle" font-size="46" font-weight="bold" fill="#111" textLength="230" lengthAdjust="spacingAndGlyphs">Shakespeare</text>
<use href="#bookic" transform="translate(1142,592)"/>
</g>
<g id="th13">
<use href="#sbg"/>
<path d="M394 225 L416 205 L438 225 H430 V238 H402 V225 Z" fill="#b9a9dc"/>
<text x="528" y="257" font-size="64" font-weight="bold" fill="#111" textLength="149" lengthAdjust="spacingAndGlyphs">MATH</text>
<text x="466" y="292" font-size="22" font-weight="bold" fill="#111" textLength="260" lengthAdjust="spacingAndGlyphs">Numbers and more!</text>
<path d="M775 189 L868 268 L820 306 Z M795 225 L835 265 L815 280 Z" fill="#7fd1ec" fill-rule="evenodd"/>
<circle cx="1000" cy="300" r="65" fill="#f9c0b0"/>
<path d="M930 300 Q925 220 1000 215 Q1075 218 1080 290 Q1040 270 1000 260 Q960 265 930 300 Z" fill="#4a2230"/>
<g fill="none" stroke="#b9a9dc" stroke-width="6"><circle cx="970" cy="315" r="18"/><circle cx="1030" cy="310" r="18"/></g>
</g>
<clipPath id="c8"><rect x="31" y="140" width="139" height="78.3"/></clipPath>
<clipPath id="c9"><rect x="31" y="240" width="139" height="78.3"/></clipPath>
<clipPath id="c10"><rect x="31" y="340" width="139" height="78.3"/></clipPath>
<clipPath id="c11"><rect x="31" y="440" width="139" height="78.3"/></clipPath>
<clipPath id="c12"><rect x="31" y="540" width="139" height="78.3"/></clipPath>
<clipPath id="c13"><rect x="31" y="640" width="139" height="78.3"/></clipPath>
</defs>
<g fill="#fdfdfd" stroke="#c6c6c6">
<rect x="29.5" y="138.5" width="142" height="81"/>
<rect x="29.5" y="238.5" width="142" height="81"/>
<rect x="29.5" y="438.5" width="142" height="81"/>
<rect x="29.5" y="538.5" width="142" height="81"/>
<rect x="29.5" y="638.5" width="142" height="81"/>
</g>
<rect x="28.5" y="337.5" width="144" height="83" fill="#fdfdfd" stroke="#ec7350" stroke-width="3"/>
<g clip-path="url(#c8)"><g transform="translate(-25.18,117.56) scale(0.16144)"><use href="#th8"/></g></g>
<g clip-path="url(#c9)"><g transform="translate(-25.18,217.56) scale(0.16144)"><use href="#th9"/></g></g>
<g clip-path="url(#c10)"><g transform="translate(-25.18,317.56) scale(0.16144)"><use href="#sbg"/><use href="#pbar"/><use href="#title10"/><use href="#band"/><use href="#clouds10"/><use href="#boy"/></g></g>
<g clip-path="url(#c11)"><g transform="translate(-25.18,417.56) scale(0.16144)"><use href="#th11"/></g></g>
<g clip-path="url(#c12)"><g transform="translate(-25.18,517.56) scale(0.16144)"><use href="#th12"/></g></g>
<g clip-path="url(#c13)"><g transform="translate(-25.18,617.56) scale(0.16144)"><use href="#th13"/></g></g>
<g font-size="14.5" fill="#444">
<text x="7" y="148.8" textLength="7.8" lengthAdjust="spacingAndGlyphs">8</text>
<text x="7" y="248.8" textLength="7.8" lengthAdjust="spacingAndGlyphs">9</text>
<text x="0" y="348.8" textLength="15" lengthAdjust="spacingAndGlyphs" fill="#c9502c">10</text>
<text x="0" y="448.8" textLength="15" lengthAdjust="spacingAndGlyphs">11</text>
<text x="0" y="548.8" textLength="15" lengthAdjust="spacingAndGlyphs">12</text>
<text x="0" y="648.8" textLength="15" lengthAdjust="spacingAndGlyphs">13</text>
</g>

</svg>
</body></html>
